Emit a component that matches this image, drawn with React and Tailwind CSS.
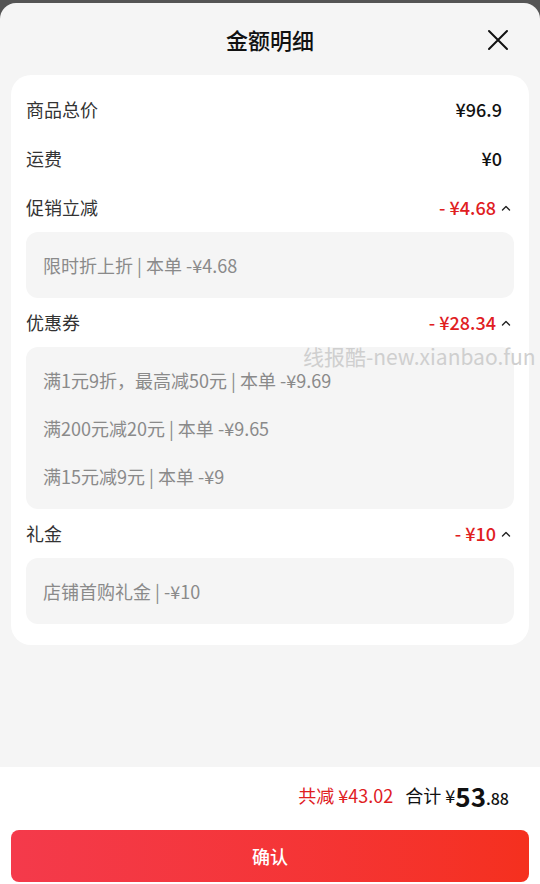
const Chevron = () => (
  <svg width="12" height="12" viewBox="0 0 12 12" className="ml-[4px]">
    <polyline points="2.5,8 6,4.5 9.5,8" fill="none" stroke="#222" strokeWidth="1.4" strokeLinecap="round" strokeLinejoin="round" />
  </svg>
);

function Row({ label, value, red }) {
  return (
    <div className="flex h-[49px] items-center justify-between">
      <span className="text-[18px] text-[#333]">{label}</span>
      {red ? (
        <span className="flex items-center pr-[2px]">
          <span className="text-[18px] font-medium text-[#e0201f]">{value}</span>
          <Chevron />
        </span>
      ) : (
        <span className="pr-[12px] text-[18px] font-medium text-[#111]">{value}</span>
      )}
    </div>
  );
}

function Detail({ lines }) {
  return (
    <div className="rounded-[12px] bg-[#f5f5f5] py-[9px] pl-[17px]">
      {lines.map((l) => (
        <div key={l} className="flex h-12 items-center text-[18px] text-[#8a8a8a]">
          {l}
        </div>
      ))}
    </div>
  );
}

export default function App() {
  return (
    <div
      className="relative flex h-[884px] w-[540px] flex-col overflow-hidden bg-[#555]"
      style={{ fontFamily: '"Noto Sans CJK SC", "Noto Sans", sans-serif' }}
    >
      <div className="mt-[3px] flex flex-1 flex-col rounded-t-[16px] bg-[#f5f5f5]">
        <div className="relative flex h-[72px] items-center justify-center">
          <span className="text-[22px] font-medium text-[#111]">金额明细</span>
          <svg width="22" height="22" viewBox="0 0 22 22" className="absolute right-[31px] top-[26px]">
            <path d="M2 2L20 20M20 2L2 20" stroke="#111" strokeWidth="2" strokeLinecap="round" />
          </svg>
        </div>

        <div className="mx-[11px] rounded-[20px] bg-white px-[15px] pb-[21px] pt-[10px]">
          <Row label="商品总价" value="¥96.9" />
          <Row label="运费" value="¥0" />
          <Row label="促销立减" value="- ¥4.68" red />
          <Detail lines={["限时折上折 | 本单 -¥4.68"]} />
          <Row label="优惠券" value="- ¥28.34" red />
          <Detail
            lines={[
              "满1元9折，最高减50元 | 本单 -¥9.69",
              "满200元减20元 | 本单 -¥9.65",
              "满15元减9元 | 本单 -¥9",
            ]}
          />
          <Row label="礼金" value="- ¥10" red />
          <Detail lines={["店铺首购礼金 | -¥10"]} />
        </div>
      </div>

      <div className="flex h-[117px] flex-col bg-white">
        <div className="flex h-[57px] items-center justify-end pr-[31px]">
          <span className="text-[18px] text-[#e0201f]">共减 ¥43.02</span>
          <span className="ml-[12px] text-[18px] text-[#111]">合计 ¥</span>
          <span className="text-[26px] font-semibold leading-none text-[#111]">53</span>
          <span className="mt-[5px] text-[16px] font-medium text-[#111]">.88</span>
        </div>
        <div className="px-[11px] pt-[6px]">
          <button className="flex h-[52px] w-full items-center justify-center rounded-[8px] bg-gradient-to-r from-[#f43a4b] to-[#f5301e] text-[18px] font-medium text-white">
            确认
          </button>
        </div>
      </div>

      <div className="pointer-events-none absolute left-[303px] top-[341px] text-[21px] text-[#cfcfcf]">
        线报酷-new.xianbao.fun
      </div>
    </div>
  );
}
